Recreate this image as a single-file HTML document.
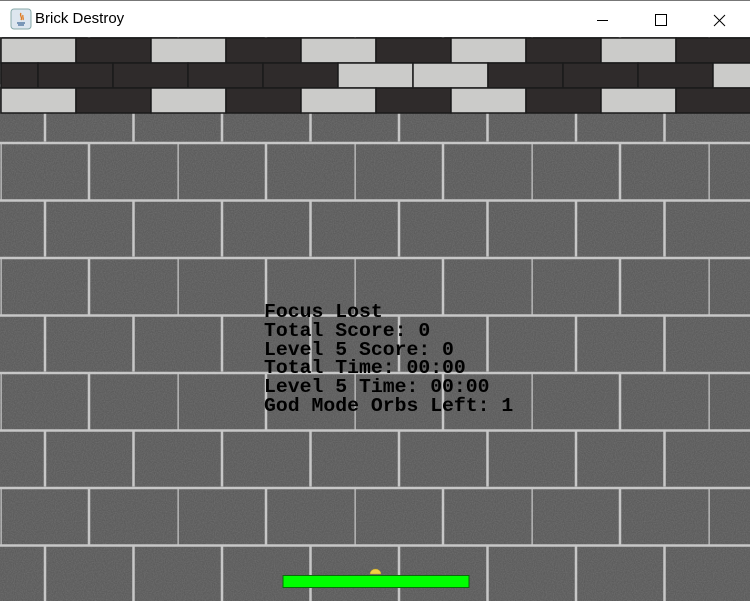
<!DOCTYPE html>
<html><head><meta charset="utf-8"><style>
body{margin:0;width:750px;height:601px;overflow:hidden;background:#fff;font-family:"Liberation Sans",sans-serif}
#title{position:absolute;left:0;top:0;width:750px;height:37px;background:#fff;border-top:1px solid #777;box-sizing:border-box}
#title .t{position:absolute;left:35px;top:9px;font-size:15px;color:#000}
#txt{position:absolute;left:264px;top:303px;font-family:"Liberation Mono",monospace;font-weight:bold;font-size:19.8px;line-height:18.8px;color:#000;white-space:pre}
</style></head><body>
<div id="title"><svg width="22" height="22" style="position:absolute;left:10px;top:7px"><rect x="1" y="1" width="20" height="20" rx="3" fill="#dde6ef" stroke="#8aa"/><path d="M7 15h8M8 17h6" stroke="#5b7fa6" stroke-width="1.5"/><path d="M11 5c-2 3 2 4 0 7M13 7c-1 2 1 3 0 5" stroke="#e07a20" stroke-width="1.3" fill="none"/></svg><span class="t">Brick Destroy</span>
<svg width="170" height="36" style="position:absolute;left:580px;top:0"><path d="M17 19.5h11" stroke="#000"/><rect x="75.5" y="13.5" width="11" height="11" fill="none" stroke="#000"/><path d="M134 14l11 11M145 14l-11 11" stroke="#000"/></svg></div>
<svg width="750" height="564" style="position:absolute;left:0;top:37px">
<defs><pattern id="w" x="0.5" y="-10.5" width="177" height="115" patternUnits="userSpaceOnUse">
<rect width="177" height="115" fill="#5c5c5c"/>
<path d="M0 1.5h177M0 59h177" stroke="#c8c8c8" stroke-width="2.5"/>
<path d="M0 1.5v57.5M88.5 1.5v57.5M44.5 59v56M133 59v56" stroke="#c8c8c8" stroke-width="2.5"/>
</pattern>
<filter id="n"><feTurbulence type="fractalNoise" baseFrequency="0.9" numOctaves="1" seed="3"/><feColorMatrix values="0 0 0 0 0.5  0 0 0 0 0.5  0 0 0 0 0.5  1 0 0 0 -0.3"/></filter></defs>
<rect width="750" height="564" fill="url(#w)"/>
<rect y="76" width="750" height="488" filter="url(#n)" opacity="0.35"/>
<g stroke="#1a1a1a" stroke-width="1.5">
<g id="r1">
<rect x="1" y="1" width="75" height="25" fill="#cbcbc9"/><rect x="76" y="1" width="75" height="25" fill="#2f2b2b"/>
<rect x="151" y="1" width="75" height="25" fill="#cbcbc9"/><rect x="226" y="1" width="75" height="25" fill="#2f2b2b"/>
<rect x="301" y="1" width="75" height="25" fill="#cbcbc9"/><rect x="376" y="1" width="75" height="25" fill="#2f2b2b"/>
<rect x="451" y="1" width="75" height="25" fill="#cbcbc9"/><rect x="526" y="1" width="75" height="25" fill="#2f2b2b"/>
<rect x="601" y="1" width="75" height="25" fill="#cbcbc9"/><rect x="676" y="1" width="75" height="25" fill="#2f2b2b"/>
</g>
<rect x="1" y="26" width="37" height="25" fill="#2f2b2b"/><rect x="38" y="26" width="75" height="25" fill="#2f2b2b"/>
<rect x="113" y="26" width="75" height="25" fill="#2f2b2b"/><rect x="188" y="26" width="75" height="25" fill="#2f2b2b"/>
<rect x="263" y="26" width="75" height="25" fill="#2f2b2b"/><rect x="338" y="26" width="75" height="25" fill="#cbcbc9"/>
<rect x="413" y="26" width="75" height="25" fill="#cbcbc9"/><rect x="488" y="26" width="75" height="25" fill="#2f2b2b"/>
<rect x="563" y="26" width="75" height="25" fill="#2f2b2b"/><rect x="638" y="26" width="75" height="25" fill="#2f2b2b"/>
<rect x="713" y="26" width="40" height="25" fill="#cbcbc9"/>
<use href="#r1" y="50"/>
</g>
<path d="M370 537a5.5 5 0 0 1 11 0z" fill="#f3cf44" stroke="#b89a20" stroke-width="0.5"/>
<rect x="283" y="538.5" width="186" height="12" fill="#00ff00" stroke="#0a6b0a" stroke-width="1"/>
</svg>
<div id="txt">Focus Lost
Total Score: 0
Level 5 Score: 0
Total Time: 00:00
Level 5 Time: 00:00
God Mode Orbs Left: 1</div>
</body></html>
